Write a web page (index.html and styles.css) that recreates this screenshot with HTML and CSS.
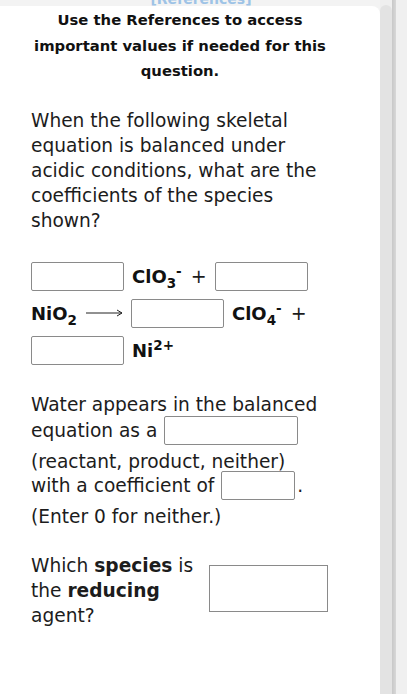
FILE: index.html
```html
<!DOCTYPE html>
<html>
<head>
<meta charset="utf-8">
<link rel="stylesheet" href="styles.css">
</head>
<body>
<div class="page">
  <div class="main">
    <div class="topbar"><span class="refs">[References]</span></div>
    <div class="card">
      <p class="notice">Use the References to access important values if needed for this question.</p>
      <p class="question">When the following skeletal equation is balanced under acidic conditions, what are the coefficients of the species shown?</p>
      <div class="equation">
        <div class="row row1">
          <span class="box"></span>
          <span class="species">ClO<sub>3</sub><sup>-</sup></span>
          <span class="plus">+</span>
          <span class="box"></span>
        </div>
        <div class="row row2">
          <span class="species">NiO<sub>2</sub></span>
          <svg class="arrow" width="38" height="10" viewBox="0 0 38 10"><line x1="0" y1="5" x2="36" y2="5" stroke="#222" stroke-width="1"/><path d="M31 2 L36 5 L31 8" fill="none" stroke="#222" stroke-width="1"/></svg>
          <span class="box"></span>
          <span class="species">ClO<sub>4</sub><sup>-</sup></span>
          <span class="plus">+</span>
        </div>
        <div class="row row3">
          <span class="box"></span>
          <span class="species">Ni<sup>2+</sup></span>
        </div>
      </div>
      <div class="water">
        <div class="line l1">Water appears in the balanced</div>
        <div class="line l2">equation as a <span class="box wide"></span></div>
        <div class="line l3">(reactant, product, neither)</div>
        <div class="line l4">with a coefficient of <span class="box small"></span>.</div>
        <div class="line l5">(Enter 0 for neither.)</div>
      </div>
      <div class="agent">
        <p class="agent-text">Which <b>species</b> is the <b>reducing</b> agent?</p>
        <span class="agent-box"></span>
      </div>
    </div>
  </div>
  <div class="scroll">
    <div class="thumb"></div>
    <div class="edge"></div>
    <div class="gutter"></div>
  </div>
</div>
</body>
</html>
```
FILE: styles.css
```css
html, body {
  margin: 0;
  padding: 0;
  height: 100%;
  background: #fff;
  overflow: hidden;
}
body {
  font-family: "DejaVu Sans", Verdana, sans-serif;
  color: #1c1c1c;
}
.page {
  display: flex;
  height: 694px;
}
.main {
  width: 380px;
  display: flex;
  flex-direction: column;
  background: #f3f3f3;
}
.topbar {
  height: 6px;
  overflow: hidden;
  display: flex;
  justify-content: center;
  padding-left: 22px;
}
.refs {
  font-size: 14px;
  color: #9ec3e6;
  font-weight: bold;
  line-height: 14px;
  margin-top: -8px;
}
.card {
  flex: 1;
  background: #fff;
  border-top-right-radius: 8px;
}
.notice {
  margin: 1px 0 0 30px;
  width: 300px;
  text-align: center;
  font-weight: bold;
  font-size: 14.8px;
  line-height: 25.5px;
  color: #111;
}
.question {
  margin: 24px 0 0 31px;
  width: 300px;
  font-size: 18.6px;
  line-height: 25px;
}
.equation {
  margin: 29px 0 0 31px;
  display: flex;
  flex-direction: column;
  gap: 8px;
}
.row {
  display: flex;
  align-items: center;
  height: 29px;
}
.box {
  display: inline-block;
  width: 91px;
  height: 27px;
  border: 1px solid #8a8a8a;
  border-radius: 2px;
  flex: none;
}
.species {
  font-weight: bold;
  font-size: 18px;
  margin-left: 8px;
  color: #111;
  white-space: nowrap;
}
.row2 .species:first-child { margin-left: 0; }
.species sub, .species sup {
  font-size: 13.5px;
  line-height: 0;
}
.plus {
  font-size: 19px;
  margin-left: 9px;
  margin-right: 8px;
}
.arrow {
  margin: 0 7px 0 9px;
  flex: none;
}
.water {
  margin: 27px 0 0 31px;
}
.line {
  font-size: 18.6px;
  line-height: 25px;
  display: flex;
  align-items: center;
  height: 25px;
  white-space: pre;
}
.l2 { height: 29px; margin-top: -1px; }
.l3 { margin-top: 4px; }
.l4 { height: 29px; margin-top: -3px; }
.l5 { margin-top: 4px; }
.box.wide {
  width: 132px;
  margin-left: 1px;
}
.box.small {
  width: 72px;
  margin-left: 1px;
  margin-right: 2px;
}
.agent {
  margin: 24px 0 0 31px;
  display: flex;
  align-items: flex-start;
}
.agent-text {
  margin: 0;
  width: 172px;
  font-size: 18.6px;
  line-height: 25px;
}
.agent-box {
  margin-left: 6px;
  margin-top: 12px;
  width: 117px;
  height: 45px;
  border: 1px solid #8a8a8a;
  flex: none;
}
.scroll {
  flex: 1;
  display: flex;
  background: #efefef;
}
.thumb {
  width: 12px;
  margin-top: 5px;
  background: #e3e3e3;
  border-radius: 6px 6px 0 0;
}
.edge {
  width: 4px;
  background: linear-gradient(to right, #c8c8c8, #d8d8d8);
}
.gutter {
  flex: 1;
  background: #f0f0f0;
}
```
